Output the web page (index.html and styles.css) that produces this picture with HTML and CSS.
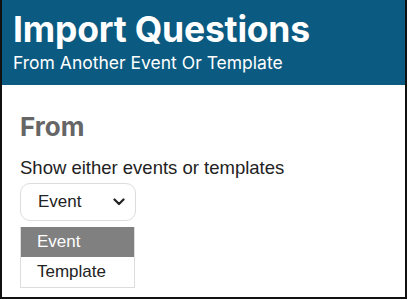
FILE: index.html
```html
<!DOCTYPE html>
<html>
<head>
<meta charset="utf-8">
<link rel="stylesheet" href="styles.css">
</head>
<body>
<div class="frame">
  <header class="banner">
    <h1 class="title">Import Questions</h1>
    <p class="subtitle">From Another Event Or Template</p>
  </header>
  <main class="content">
    <h2 class="section">From</h2>
    <p class="label">Show either events or templates</p>
    <div class="select">
      <span class="select-value">Event</span>
      <svg class="chev" width="12" height="8" viewBox="0 0 12 8"><path d="M1.5 1.5 L6 6 L10.5 1.5" fill="none" stroke="#222" stroke-width="2.2" stroke-linecap="round" stroke-linejoin="round"/></svg>
    </div>
    <ul class="options">
      <li class="option active">Event</li>
      <li class="option">Template</li>
    </ul>
  </main>
</div>
</body>
</html>
```
FILE: styles.css
```css
* { box-sizing: border-box; }
html, body { margin: 0; padding: 0; background: #fff; }
body { width: 408px; height: 300px; overflow: hidden; }
.frame {
  width: 407px;
  height: 299px;
  border-left: 2px solid #111;
  border-right: 2px solid #111;
  border-bottom: 2px solid #111;
  display: flex;
  flex-direction: column;
}
.banner {
  background: #0b5a81;
  height: 85px;
  padding: 9px 0 0 11px;
  color: #fff;
  font-family: Inter, "Noto Sans", sans-serif;
}
.title {
  margin: 0;
  font-size: 35.5px;
  font-weight: 700;
  line-height: 42px;
  letter-spacing: -0.2px;
}
.subtitle {
  margin: 1px 0 0 0;
  font-size: 17.5px;
  line-height: 21px;
  font-weight: 400;
}
.content {
  padding: 27px 0 0 18px;
  font-family: "Liberation Sans", Arial, sans-serif;
  color: #222;
}
.section {
  margin: 0;
  font-family: Inter, "Noto Sans", sans-serif;
  font-size: 26px;
  font-weight: 700;
  color: #666;
  line-height: 30px;
}
.label {
  margin: 15px 0 0 0;
  font-size: 18.5px;
  line-height: 21px;
}
.select {
  margin-top: 5px;
  width: 116px;
  height: 38px;
  border: 1px solid #ddd;
  border-radius: 10px;
  display: flex;
  align-items: center;
  justify-content: space-between;
  padding: 0 10px 0 17px;
  font-size: 17px;
}
.options {
  list-style: none;
  margin: 6px 0 0 0;
  padding: 0;
  width: 115px;
  border: 1px solid #ddd;
  border-top: 0;
  font-size: 17px;
}
.option {
  height: 30px;
  line-height: 30px;
  padding-left: 16px;
}
.option.active {
  background: #808080;
  color: #fff;
}
```
